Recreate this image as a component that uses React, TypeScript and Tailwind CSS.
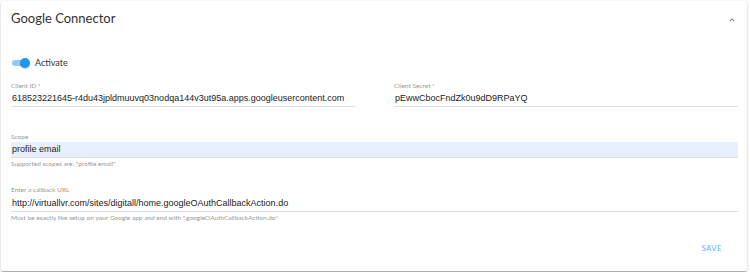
import React from "react";

const mono = { fontFamily: "'Liberation Sans', Arial, sans-serif" };

export default function App() {
  return (
    <div className="w-[750px] h-[272px] bg-white p-[1px] overflow-hidden" style={{ fontFamily: "Lato, 'Noto Sans', sans-serif" }}>
      <div className="w-[746px] h-[270px] bg-white rounded-[2px] shadow-[0px_1px_3px_0px_rgba(0,0,0,0.2),0px_1px_1px_0px_rgba(0,0,0,0.14),0px_2px_1px_-1px_rgba(0,0,0,0.12)] flex flex-col">
        <div className="flex items-center justify-between h-[36px] pl-[10px] pr-[10px]">
          <span className="text-[13px] text-[#333]">Google Connector</span>
          <svg width="10" height="10" viewBox="0 0 24 24" className="mt-[2px]">
            <path d="M7.41 15.41 12 10.83l4.59 4.58L18 14l-6-6-6 6z" fill="#777" />
          </svg>
        </div>
        <div className="pl-[10px] pr-[9px] pt-[20px]">
          <div className="flex items-center gap-[5px] h-[12px]">
            <div className="relative w-[19px] h-[10px] flex items-center">
              <div className="w-[17px] h-[6px] rounded-full bg-[#90caf9] ml-[1px]" />
              <div className="absolute right-0 top-0 w-[10px] h-[10px] rounded-full bg-[#2196f3] shadow-[0_1px_1px_rgba(0,0,0,0.2)]" />
            </div>
            <span className="text-[9px] text-[#333]">Activate</span>
          </div>
          <div className="grid grid-cols-2 gap-x-[39px] mt-[13px]">
            <Field label="Client ID *" value="618523221645-r4du43jpldmuuvq03nodqa144v3ut95a.apps.googleusercontent.com" />
            <Field label="Client Secret *" value="pEwwCbocFndZk0u9dD9RPaYQ" />
          </div>
          <div className="mt-[26px]">
            <div className="text-[6.5px] text-[#999] leading-[8px]">Scope</div>
            <div className="h-[16px] bg-[#e8f0fe] border-b border-[#e0e0e0] flex items-center pl-[1px] mt-[1px]">
              <span className="text-[9px] text-[#222]" style={mono}>profile email</span>
            </div>
            <div className="text-[6.5px] text-[#999] leading-[8px] mt-[2px]">Supported scopes are: "profile email"</div>
          </div>
          <div className="mt-[18px]">
            <div className="text-[6.5px] text-[#999] leading-[8px]">Enter a callback URL</div>
            <div className="h-[18px] border-b border-[#e0e0e0] flex items-center pl-[1px] pt-[2px]">
              <span className="text-[9px] text-[#222] whitespace-nowrap" style={mono}>http://virtuallvr.com/sites/digitall/home.googleOAuthCallbackAction.do</span>
            </div>
            <div className="text-[6.5px] text-[#999] leading-[8px] mt-[2px]">Must be exactly like setup on your Google app and end with ".googleOAuthCallbackAction.do"</div>
          </div>
          <div className="flex justify-end mt-[20px] pr-[16px]">
            <span className="text-[8px] text-[#64b5f6] tracking-[0.3px]">SAVE</span>
          </div>
        </div>
      </div>
    </div>
  );
}

function Field({ label, value }: { label: string; value: string }) {
  return (
    <div>
      <div className="text-[6.5px] text-[#999] leading-[8px]">{label}</div>
      <div className="h-[17px] border-b border-[#e0e0e0] flex items-center pl-[1px] pt-[1px]">
        <span className="text-[9px] text-[#222] whitespace-nowrap" style={mono}>{value}</span>
      </div>
    </div>
  );
}
